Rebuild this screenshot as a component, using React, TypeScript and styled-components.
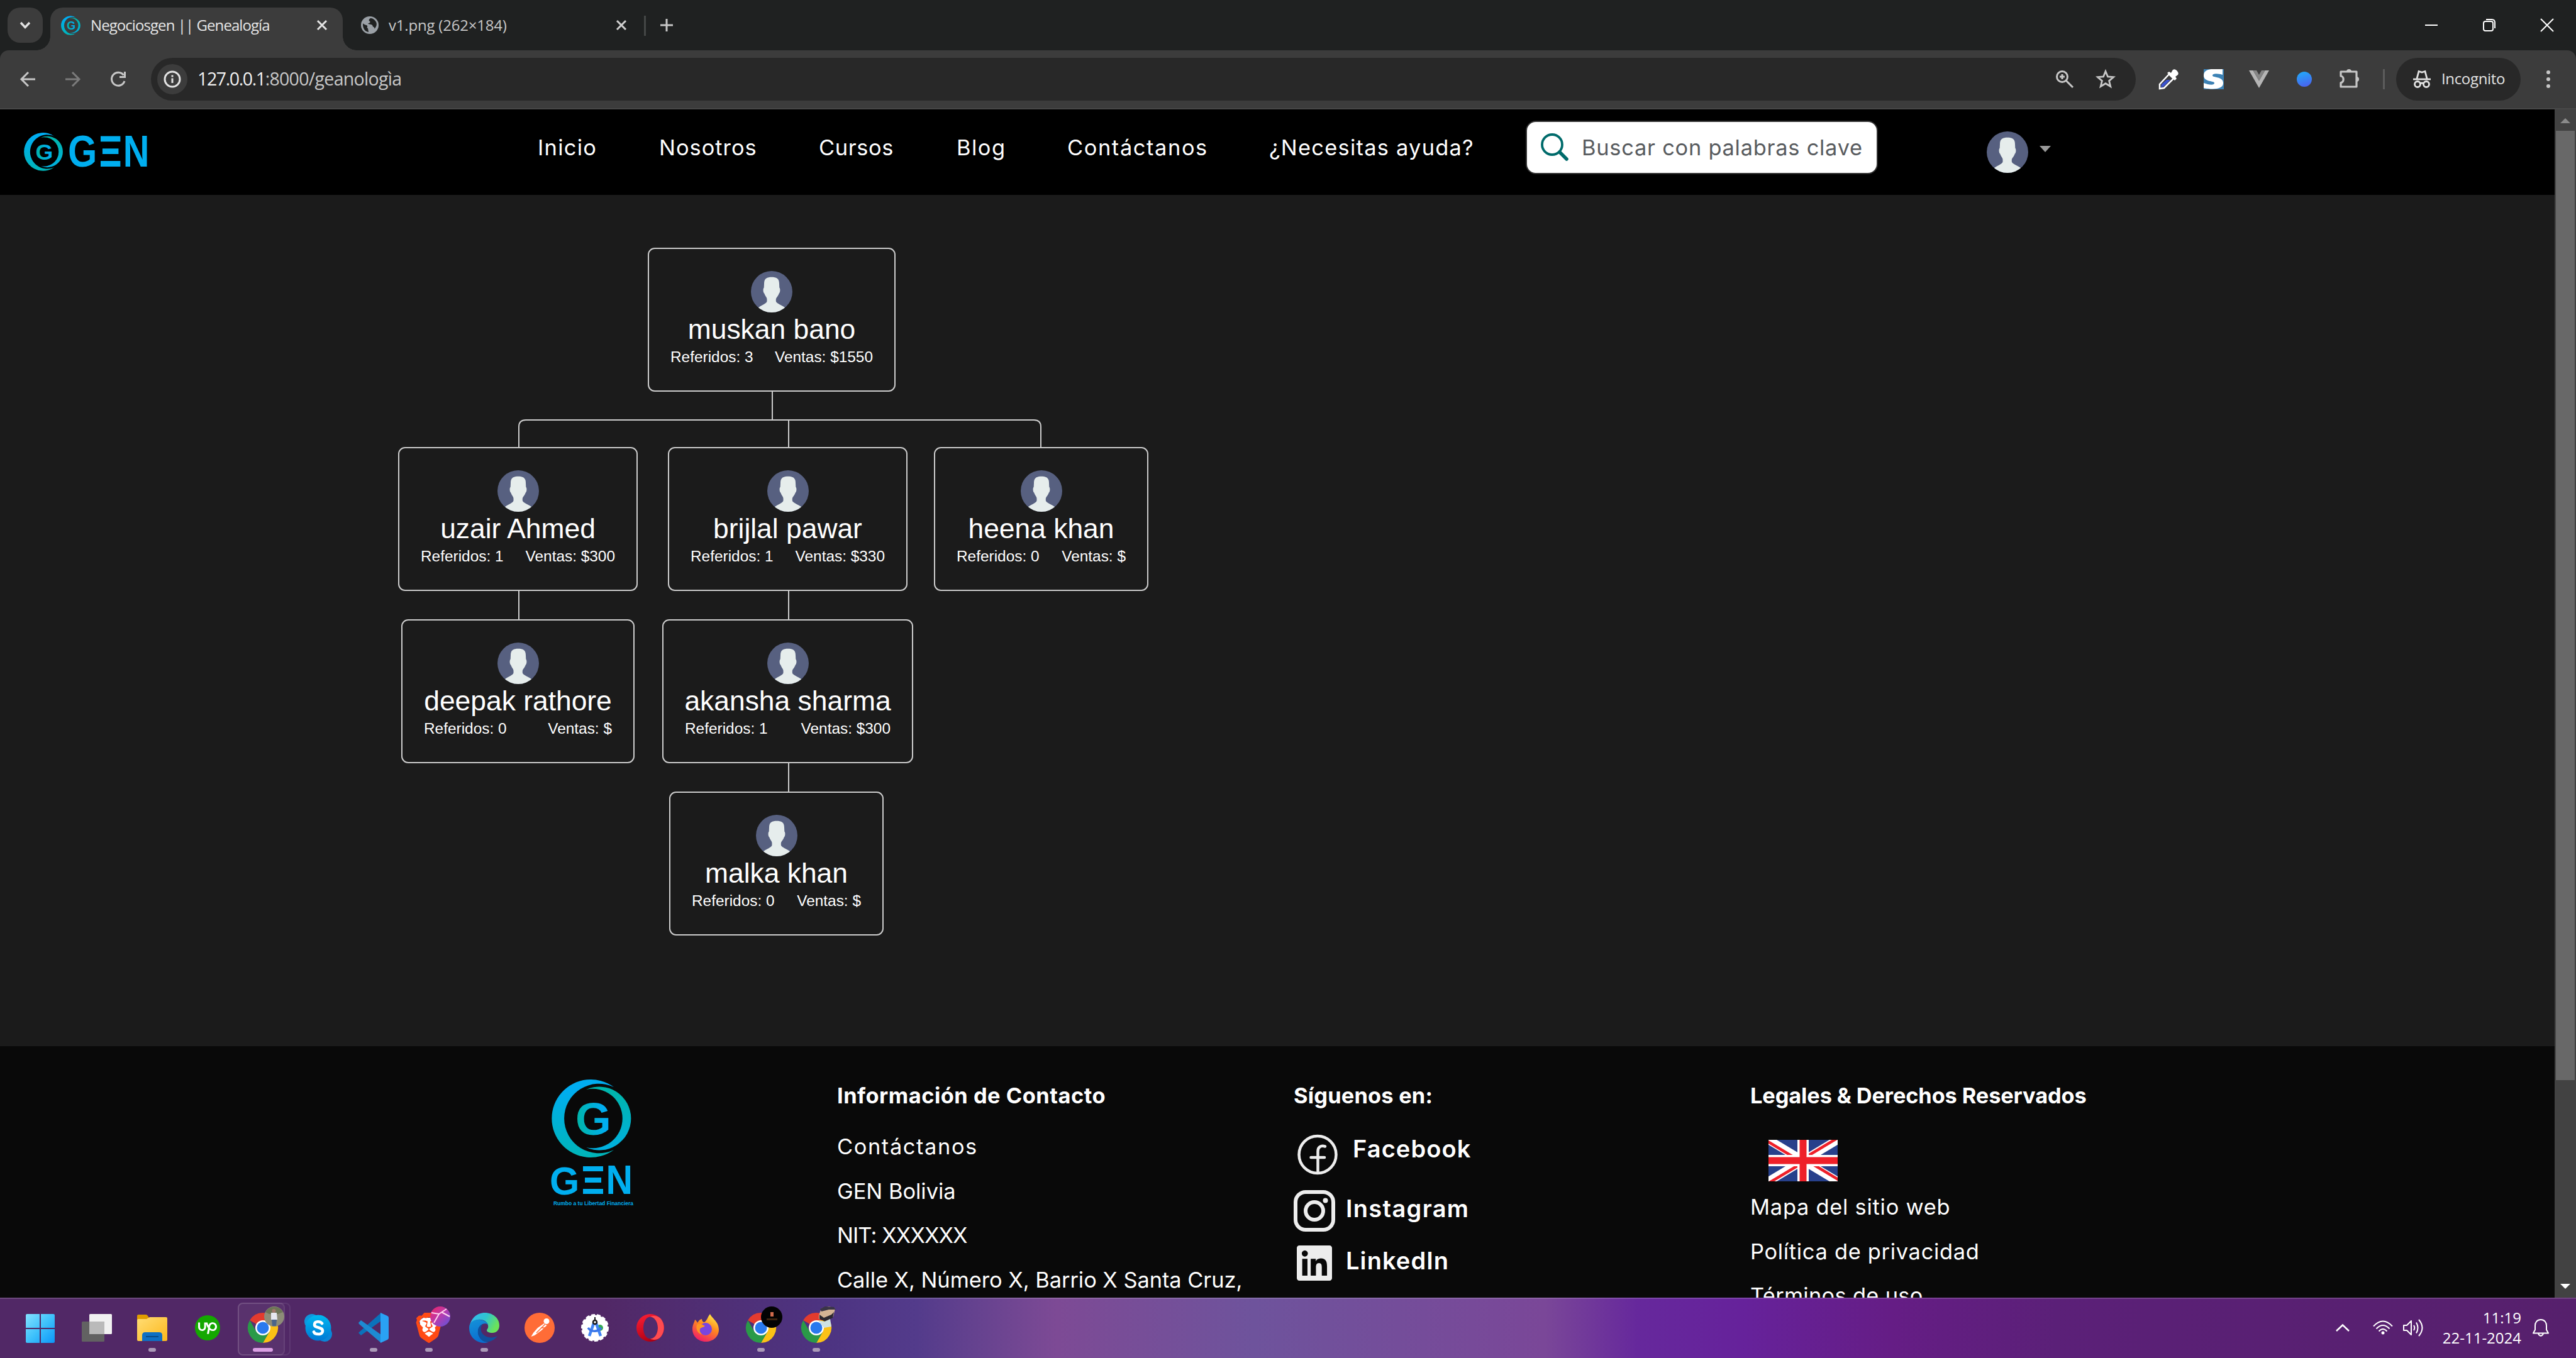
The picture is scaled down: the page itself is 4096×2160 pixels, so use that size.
import React from "react";
import styled, { createGlobalStyle, css } from "styled-components";
import { FaLinkedin, FaUpwork, FaBrave } from "react-icons/fa6";

const UI = `"Open Sans", "Noto Sans", sans-serif`;
const SITE = `Inter, "Liberation Sans", sans-serif`;
const ARIAL = `"Liberation Sans", Arial, sans-serif`;

const GlobalStyle = createGlobalStyle`
  html, body { margin: 0; padding: 0; background: #1b1b1b; }
  * { box-sizing: border-box; }
  svg { display: block; flex: none; overflow: visible; }
`;

type TypeProps = { $size: number; $ls?: number; $w?: number };
const type = css<TypeProps>`
  font-size: ${(p) => p.$size}px;
  letter-spacing: ${(p) => p.$ls ?? 0}px;
  ${(p) => (p.$w ? `width: ${p.$w}px;` : "")}
  white-space: nowrap;
  flex: none;
`;

const Screen = styled.div`
  width: 4096px;
  height: 2160px;
  display: flex;
  flex-direction: column;
  overflow: hidden;
  background: #1b1b1b;
`;

/* ---------- browser chrome ---------- */
const Frame = styled.header`
  background: #1f2121;
  font-family: ${UI};
  color: #e3e3e3;
`;
const TabStrip = styled.div`
  display: flex;
  height: 80px;
  padding: 12px 36px 0 12px;
`;
const TabSearch = styled.div`
  width: 56px;
  height: 56px;
  border-radius: 20px;
  background: #3c3c3c;
  display: flex;
  align-items: center;
  justify-content: center;
`;
const Tab = styled.div<{ $active?: boolean }>`
  position: relative;
  display: flex;
  align-items: center;
  width: ${(p) => (p.$active ? 465 : 479)}px;
  margin-left: ${(p) => (p.$active ? 12 : 0)}px;
  height: 68px;
  padding: 0 ${(p) => (p.$active ? "26px 12px 17px" : "29px 12px 29px")};
  border-radius: 20px 20px 0 0;
  background: ${(p) => (p.$active ? "#3c3c3c" : "transparent")};
  color: ${(p) => (p.$active ? "#e6e6e6" : "#c7c7c7")};
  ${(p) =>
    p.$active &&
    css`
      &::before,
      &::after {
        content: "";
        position: absolute;
        bottom: 0;
        width: 22px;
        height: 22px;
      }
      &::before {
        left: -22px;
        background: radial-gradient(circle at 0 0, transparent 21.5px, #3c3c3c 22px);
      }
      &::after {
        right: -22px;
        background: radial-gradient(circle at 100% 0, transparent 21.5px, #3c3c3c 22px);
      }
    `}
`;
const TabTitle = styled.span<TypeProps>`
  ${type}
  margin-left: 16px;
  margin-right: auto;
  line-height: 56px;
`;
const TabRule = styled.i`
  width: 3px;
  height: 32px;
  margin: 13px 23px 0 0;
  background: #444746;
`;
const WindowButtons = styled.div`
  display: flex;
  gap: 72px;
  margin: 18px 0 0 auto;
`;
const NewTab = styled.div`
  margin-top: 18px;
`;
const Toolbar = styled.div`
  display: flex;
  align-items: center;
  height: 94px;
  padding-left: 32px;
  background: #3c3c3c;
  border-bottom: 2px solid #484848;
  border-radius: 14px 14px 0 0;
`;
const NavButtons = styled.div`
  display: flex;
  gap: 48px;
`;
const Omnibox = styled.div`
  display: flex;
  align-items: center;
  width: 3156px;
  height: 68px;
  margin-left: 40px;
  padding: 0 32px 0 10px;
  border-radius: 34px;
  background: #282828;
`;
const InfoChip = styled.div`
  width: 48px;
  height: 48px;
  border-radius: 50%;
  background: #3c3c3c;
  display: flex;
  align-items: center;
  justify-content: center;
`;
const Url = styled.span<TypeProps>`
  ${type}
  margin-left: 16px;
  line-height: 66px;
  padding-bottom: 2px;
  color: #c7c7c7;
  b {
    font-weight: 400;
    letter-spacing: -1.4px;
    color: #f1f1f1;
  }
`;
const OmniActions = styled.div`
  display: flex;
  gap: 33px;
  margin-left: auto;
`;
const Extensions = styled.div`
  display: flex;
  gap: 40px;
  margin-left: 36px;
`;
const ToolRule = styled.i`
  width: 3px;
  height: 32px;
  margin: 0 18px 0 37px;
  background: #5c5c5c;
`;
const IncognitoPill = styled.div`
  display: flex;
  align-items: center;
  width: 198px;
  height: 68px;
  margin-right: 38px;
  padding-left: 25px;
  border-radius: 34px;
  background: #282828;
`;
const PillText = styled.span<TypeProps>`
  ${type}
  margin-left: 15px;
  line-height: 64px;
  padding-bottom: 2px;
`;

/* ---------- site ---------- */
const Viewport = styled.div`
  display: flex;
  height: 1890px;
`;
const Page = styled.main`
  width: 4062px;
  display: flex;
  flex-direction: column;
  overflow: hidden;
  font-family: ${SITE};
  color: #fff;
`;
const ScrollTrack = styled.div`
  width: 34px;
  display: flex;
  flex-direction: column;
  align-items: center;
  padding: 14px 0;
  background: #424242;
`;
const ScrollThumb = styled.div`
  width: 30px;
  height: 1510px;
  margin: 12px 0 auto;
  background: #686868;
`;
const Navbar = styled.nav`
  display: flex;
  align-items: flex-start;
  height: 136px;
  flex: none;
  padding: 0 0 0 38px;
  background: #000;
`;
const LogoLink = styled.a`
  width: 817px;
  padding-top: 37px;
`;
const NavLinks = styled.div`
  display: flex;
  gap: 101px;
  padding-top: 34px;
`;
const NavLink = styled.a<TypeProps>`
  ${type}
  line-height: 54px;
`;
const SearchBox = styled.div`
  display: flex;
  align-items: flex-start;
  width: 560px;
  height: 85px;
  margin: 18px 0 0 85px;
  padding: 0 0 0 22px;
  border: 2px solid #333;
  border-radius: 16px;
  background: #fff;
`;
const SearchIconBox = styled.span`
  padding-top: 18px;
`;
const Placeholder = styled.span<TypeProps>`
  ${type}
  margin: 14px 0 0 21px;
  line-height: 54px;
  color: #595c5f;
`;
const Account = styled.div`
  display: flex;
  gap: 18px;
  margin: 35px 0 0 173px;
`;
const Caret = styled.i<{ $up?: boolean; $c: string; $x: number; $y: number }>`
  display: block;
  width: 0;
  height: 0;
  border: solid transparent;
  border-width: ${(p) => (p.$up ? `0 ${p.$x}px ${p.$y}px` : `${p.$y}px ${p.$x}px 0`)};
  border-${(p) => (p.$up ? "bottom" : "top")}-color: ${(p) => p.$c};
`;
const AccountCaret = styled.div`
  padding-top: 23px;
`;

const Canvas = styled.section`
  position: relative;
  height: 1354px;
  flex: none;
  background: #1b1b1b;
  font-family: ${ARIAL};
`;
const Wires = styled.svg`
  position: absolute;
  left: 0;
  top: 0;
`;
const Node = styled.article<{ $x: number; $y: number; $w: number }>`
  position: absolute;
  left: ${(p) => p.$x}px;
  top: ${(p) => p.$y}px;
  width: ${(p) => p.$w}px;
  height: 229px;
  padding: 35px 34px 0;
  border: 2px solid #ccc;
  border-radius: 11px;
  display: flex;
  flex-direction: column;
  align-items: center;
`;
const NodeName = styled.h3`
  margin: 2px 0 0;
  font-size: 44.4px;
  font-weight: 400;
  line-height: 50px;
  white-space: nowrap;
`;
const NodeStats = styled.div`
  align-self: stretch;
  display: flex;
  justify-content: space-between;
  font-size: 24.4px;
  line-height: 38px;
  white-space: nowrap;
`;

const Footer = styled.footer`
  display: grid;
  grid-template-columns: 455px 726px 726px auto;
  align-items: start;
  height: 400px;
  flex: none;
  padding: 52px 0 0 877px;
  background: #090909;
  overflow: hidden;
`;
const FooterLogo = styled.div`
  padding-top: 1px;
`;
const Column = styled.div`
  display: flex;
  flex-direction: column;
  align-items: flex-start;
`;
const Heading = styled.h4<TypeProps>`
  ${type}
  margin: 0 0 27px -1px;
  line-height: 54px;
  font-weight: 700;
`;
const FooterLink = styled.a<TypeProps>`
  ${type}
  line-height: 54px;
  margin: 0 0 16.5px -1px;
`;
const Social = styled.a<{ $indent: number; $after: number }>`
  display: flex;
  align-items: flex-start;
  height: 66px;
  margin: 0 0 ${(p) => p.$after}px ${(p) => p.$indent}px;
`;
const SocialIcon = styled.span`
  width: 66px;
  height: 66px;
  display: flex;
  align-items: center;
  justify-content: center;
  color: #ededed;
`;
const SocialName = styled.b<TypeProps & { $gap: number; $lift: number }>`
  ${type}
  line-height: 58px;
  font-weight: 600;
  margin: ${(p) => -p.$lift}px 0 0 ${(p) => p.$gap}px;
`;
const FlagBox = styled.div`
  margin: 16px 0 14px 28px;
`;
const SocialList = styled.div`
  padding-top: 6px;
  margin-left: -1px;
`;

/* ---------- taskbar ---------- */
const Taskbar = styled.div`
  display: flex;
  height: 96px;
  padding: 0 43px 0 22px;
  box-shadow: inset 0 2px 0 rgba(255, 255, 255, 0.16);
  background: linear-gradient(
    90deg,
    #512866 0,
    #512866 960px,
    #4f2f76 1150px,
    #4d3482 1330px,
    #533b8b 1458px,
    #65428f 1551px,
    #7d4a95 1680px,
    #6e539c 1994px,
    #7a4798 2456px,
    #66289c 2604px,
    #66229b 2770px,
    #651d85 3010px,
    #5b2078 3268px,
    #56206c 4096px
  );
  font-family: ${UI};
  color: #fff;
`;
const AppButton = styled.div<{ $active?: boolean }>`
  position: relative;
  width: 88px;
  height: 96px;
  display: flex;
  align-items: center;
  justify-content: center;
  ${(p) =>
    p.$active &&
    css`
      &::before,
      &::after {
        content: "";
        position: absolute;
        left: 4px;
        top: 8px;
        width: 71px;
        height: 80px;
        border-radius: 8px;
        border: 2px solid rgba(255, 255, 255, 0.08);
        background: rgba(255, 255, 255, 0.05);
      }
      &::after {
        width: 80px;
        background: none;
      }
    `}
  svg {
    position: relative;
  }
`;
const Running = styled.i<{ $active?: boolean }>`
  position: absolute;
  bottom: 10px;
  left: ${(p) => (p.$active ? 28 : 38)}px;
  width: ${(p) => (p.$active ? 32 : 12)}px;
  height: 6px;
  border-radius: 3px;
  background: ${(p) => (p.$active ? "#dba0e4" : "#ab9ab8")};
`;
const Badge = styled.span<{ $x: number }>`
  position: absolute;
  z-index: 1;
  left: ${(p) => p.$x}px;
  top: 14px;
`;
const Tray = styled.div`
  display: flex;
  align-items: center;
  margin-left: auto;
`;
const TrayIcon = styled.span<{ $gap: number }>`
  margin-left: ${(p) => p.$gap}px;
`;
const Clock = styled.div`
  width: 122px;
  margin: 0 18px 0 34px;
  display: flex;
  flex-direction: column;
  align-items: flex-end;
`;
const ClockLine = styled.span<TypeProps>`
  ${type}
  line-height: 32px;
`;

/* ---------- drawings ---------- */
const Stroke = (p: { s: number; w?: number; c?: string; h?: number; children: React.ReactNode }) => (
  <svg width={p.s} height={p.h ?? p.s} viewBox={`0 0 ${p.s} ${p.h ?? p.s}`} fill="none" stroke={p.c ?? "#c7c7c7"} strokeWidth={p.w ?? 3}>
    {p.children}
  </svg>
);

const Swirl = ({ id, k = 1 }: { id: string; k?: number }) => (
  <g transform={`scale(${k})`}>
    <defs>
      <linearGradient id={`${id}a`} x1="0" y1="0" x2="0" y2="1">
        <stop offset="0.1" stopColor="#00adf2" />
        <stop offset="1" stopColor="#00b5b8" />
      </linearGradient>
      <linearGradient id={`${id}b`} x1="0" y1="0" x2="0" y2="1">
        <stop offset="0.1" stopColor="#00b5ad" />
        <stop offset="1" stopColor="#00b0e0" />
      </linearGradient>
      <linearGradient id={`${id}c`} x1="0" y1="0.6" x2="1" y2="0.4">
        <stop offset="0.1" stopColor="#00b5ad" />
        <stop offset="0.8" stopColor="#00adf0" />
      </linearGradient>
    </defs>
    <path d="M99 12A62 62 0 1 0 99 112A55.3 55.3 0 1 1 99 12Z" fill={`url(#${id}a)`} />
    <path d="M55 16A50.5 50.5 0 1 1 55 108A47.2 47.2 0 1 0 55 16Z" fill={`url(#${id}b)`} />
    <text x="38" y="88" fontFamily="Liberation Sans" fontWeight="700" fontSize="73" fill={`url(#${id}c)`}>
      G
    </text>
  </g>
);

const Wordmark = ({ x, y, kx = 1, ky = 1 }: { x: number; y: number; kx?: number; ky?: number }) => (
  <g transform={`translate(${x} ${y}) scale(${kx} ${ky})`} fill="#00aeef" fontFamily="Liberation Sans" fontWeight="700" fontSize="62">
    <text transform="translate(-3 -0.500) scale(0.980 1.020)">G</text>
    <path d="M50-45H82V-37H50ZM53-27H79V-19H53ZM50-9H82V-1H50Z" />
    <text transform="translate(86.500 -1) scale(0.950 1.030)">N</text>
  </g>
);

const NavLogo = () => (
  <svg width="200" height="62" viewBox="0 0 200 62">
    <Swirl id="n" k={0.49} />
    <Wordmark x={73} y={55} kx={0.98} ky={1.1} />
  </svg>
);

const StackedLogo = () => (
  <svg width="130" height="202" viewBox="0 0 130 202">
    <Swirl id="f" />
    <Wordmark x={0} y={183} />
    <text x="3" y="200" textLength="127" fontFamily="Liberation Sans" fontWeight="700" fontSize="8.8" fill="#00aeef" lengthAdjust="spacingAndGlyphs">
      Rumbo a tu Libertad Financiera
    </text>
  </svg>
);

const Avatar = () => (
  <svg width="66" height="66" viewBox="0 0 66 66">
    <defs>
      <clipPath id="avatarClip">
        <circle cx="33" cy="33" r="33" />
      </clipPath>
    </defs>
    <g clipPath="url(#avatarClip)">
      <rect width="66" height="66" fill="#576080" />
      <path
        d="M33 9.7C26 9.7 21 11.5 21 20L20.7 26.5C19 28 19.2 34.5 21.5 36C22.5 40 25.500 41.5 25.5 45V48C25.5 51 21 52.5 12 58L6 66H60L54 58C45 52.5 40 51 39.8 48V45C40.5 41.5 43.5 40 44.5 36C46.8 34.5 47 28 45.3 26.5L45 20C45 11.5 40 9.7 33 9.7Z"
        fill="#e6edec"
      />
    </g>
  </svg>
);

const Flag = () => (
  <svg width="110" height="66" viewBox="0 0 110 66">
    <defs>
      <clipPath id="flagClip">
        <rect width="110" height="66" />
      </clipPath>
    </defs>
    <g clipPath="url(#flagClip)">
      <rect width="110" height="66" fill="#27408b" />
      <path d="M0 0L110 66M110 0L0 66" stroke="#fff" strokeWidth="13.5" />
      <path d="M-4 1L55 36.5M110 -3L55 30M114 65L55 29.5M0 69L55 36" stroke="#ee2029" strokeWidth="4.5" />
      <path d="M55 0V66" stroke="#fff" strokeWidth="18" />
      <path d="M0 33H110" stroke="#fff" strokeWidth="18" />
      <path d="M55 0V66" stroke="#ee2029" strokeWidth="11" />
      <path d="M0 33H110" stroke="#ee2029" strokeWidth="11" />
    </g>
  </svg>
);

const Globe = () => (
  <svg width="28" height="28" viewBox="0 0 28 28">
    <circle cx="14" cy="14" r="14" fill="#9aa0a6" />
    <path d="M3 11C5 14 9 13 10 15S8 18 11 19L12 25C7 24.5 2.5 20 3 11ZM15 3C12 5 12 7 14 8C16 9 13 11 11 11.5C12 13 18 12 18.5 15C19 18 22 16 21.5 20C24 17 26 13 24 9C21 4 18 3 15 3Z" fill="#1f2121" />
  </svg>
);

const ChromeIcon = () => (
  <svg width="48" height="48" viewBox="0 0 48 48">
    <path d="M24 24L3.2 12A24 24 0 0 1 44.8 12Z" fill="#e33b2e" />
    <path d="M24 12H44.8A24 24 0 0 1 24 48L34.4 30Z" fill="#fbc116" />
    <path d="M3.2 12A24 24 0 0 0 24 48L34.4 30L24 34L13.6 30Z" fill="#2a9a48" />
    <circle cx="24" cy="24" r="12" fill="#fff" />
    <circle cx="24" cy="24" r="9.5" fill="#2979ee" />
  </svg>
);

const WindowsIcon = () => (
  <svg width="46" height="46" viewBox="0 0 46 46">
    <defs>
      <linearGradient id="win" gradientUnits="userSpaceOnUse" x1="0" y1="0" x2="46" y2="46">
        <stop offset="0" stopColor="#84e2ff" />
        <stop offset="0.5" stopColor="#3fc2fb" />
        <stop offset="1" stopColor="#0c96f8" />
      </linearGradient>
    </defs>
    <path transform="translate(-2 1)" d="M2 0H22V22H0V2Q0 0 2 0ZM24 0H44Q46 0 46 2V22H24ZM0 24H22V46H2Q0 46 0 44ZM24 24H46V44Q46 46 44 46H24Z" fill="url(#win)" />
  </svg>
);
const TaskViewIcon = () => (
  <svg width="48" height="44" viewBox="0 0 48 44">
    <rect x="12" width="36" height="32" rx="1.5" fill="#f1f1f1" />
    <rect y="12" width="36" height="32" rx="1.5" fill="#626262" />
    <rect x="12" y="12" width="24" height="20" fill="#bababa" />
  </svg>
);
const ExplorerIcon = () => (
  <svg width="48" height="42" viewBox="0 0 48 42">
    <defs>
      <linearGradient id="folder" x1="0" y1="0" x2="1" y2="1">
        <stop offset="0" stopColor="#ffdd75" />
        <stop offset="1" stopColor="#fcb81c" />
      </linearGradient>
    </defs>
    <path d="M0 2Q0 0 2 0H14Q16 0 17 2L19 5V12H0Z" fill="#e09d00" />
    <path d="M0 9Q0 7 2 7H15L20 4H46Q48 4 48 6V40Q48 42 46 42H2Q0 42 0 40Z" fill="url(#folder)" />
    <path d="M8 42V33Q8 28 13 28H35Q40 28 40 33V42Z" fill="#0f70c4" />
    <path d="M14 35H34" stroke="#0a4a85" strokeWidth="2" />
  </svg>
);
const UpworkIcon = () => (
  <svg width="40" height="40" viewBox="0 0 40 40">
    <circle cx="20" cy="20" r="20" fill="#14a800" />
    <FaUpwork x="5" y="5.5" size={30} color="#fff" />
  </svg>
);
const SkypeIcon = () => (
  <svg width="44" height="44" viewBox="0 0 44 44">
    <defs>
      <linearGradient id="sky" x1="0" y1="0" x2="0" y2="1">
        <stop offset="0" stopColor="#00b7f0" />
        <stop offset="1" stopColor="#0078d4" />
      </linearGradient>
    </defs>
    <circle cx="12" cy="12" r="12" fill="#0f96dc" />
    <circle cx="32" cy="32" r="12" fill="#0a86d8" />
    <circle cx="22" cy="22" r="20.5" fill="url(#sky)" />
    <path d="M28 15C25 11 16 11 16 17C16 23 29 20 29 27C29 34 17 33 15 28.500" fill="none" stroke="#fff" strokeWidth="4.6" strokeLinecap="round" />
  </svg>
);
const CodeIcon = () => (
  <svg width="48" height="48" viewBox="0 0 48 48">
    <path d="M0 32L4 36L36 13V0L2 30Z" fill="#0a72bb" />
    <path d="M0 16L4 12L36 35V48L1 18Z" fill="#1d8ad3" />
    <path d="M35 0L46 5Q48 6 48 8V40Q48 42 46 43L35 48Z" fill="#2aa2f4" />
  </svg>
);
const BraveIcon = () => (
  <svg width="42" height="48" viewBox="0 0 42 48">
    <path d="M6 12L12 8H30L36 12L34 27L27 35L21 40L15 35L8 27Z" fill="#fff" />
    <FaBrave x="-3" y="0" size={48} color="#ff4a14" />
  </svg>
);
const EdgeIcon = () => (
  <svg width="48" height="48" viewBox="0 0 48 48">
    <defs>
      <linearGradient id="edgeTop" x1="0" y1="0" x2="1" y2="0.4">
        <stop offset="0" stopColor="#35b8f3" />
        <stop offset="0.55" stopColor="#2fc5cf" />
        <stop offset="1" stopColor="#6be35a" />
      </linearGradient>
      <linearGradient id="edgeLow" x1="0" y1="0" x2="0.3" y2="1">
        <stop offset="0" stopColor="#1592d8" />
        <stop offset="1" stopColor="#0a6fd0" />
      </linearGradient>
    </defs>
    <path d="M1 20C4 7 14 0 25 0C38 0 48 9 48 20C48 28 43 32 37 32C31 32 28 30 28 28C28 26 31 25 30 20C29 14 22 10 14 11C7 12 3 15 1 20Z" fill="url(#edgeTop)" />
    <path d="M0 24C0 15 7 11 15 11C23 11 29 15 30 19C26 15 14 18 14 30C14 39 21 47 31 47C15 51 0 41 0 24Z" fill="url(#edgeLow)" />
    <path d="M22 18C16 20 13 26 14 33C16 42 23 48 31 46C37 45 42 41 45 37C36 42 22 39 19 29C18 24 19 21 22 18Z" fill="#10509e" />
  </svg>
);
const PostmanIcon = () => (
  <svg width="48" height="48" viewBox="0 0 48 48">
    <circle cx="24" cy="24" r="24" fill="#ff6c37" />
    <circle cx="35" cy="13.5" r="4.5" fill="#fff" />
    <path d="M31 17L35.500 20L27 28L16 36L10.500 38L14 32L21 24Z" fill="#fff" />
    <path d="M33 18L19 32M26 24L33 24" stroke="#ff6c37" strokeWidth="1.5" />
  </svg>
);
const StudioIcon = () => (
  <svg width="44" height="44" viewBox="0 0 44 44">
    <circle cx="22" cy="22" r="20.5" fill="#fff" stroke="#fff" strokeWidth="3" strokeDasharray="6 3" />
    <circle cx="30" cy="22" r="5" fill="#35a853" />
    <path d="M21 12L13 35M23 12L31 35" stroke="#4285f4" strokeWidth="4.5" />
    <path d="M11 22C16 29 26 29 32 22" fill="none" stroke="#3a76e8" strokeWidth="3.5" />
    <circle cx="22" cy="13" r="3" fill="#fff" stroke="#1a1a1a" strokeWidth="2.5" />
    <path d="M22 5V10" stroke="#1a1a1a" strokeWidth="2" />
  </svg>
);
const OperaIcon = () => (
  <svg width="44" height="44" viewBox="0 0 44 44">
    <defs>
      <linearGradient id="opera" x1="0" y1="0" x2="0.4" y2="1">
        <stop offset="0" stopColor="#ff2036" />
        <stop offset="1" stopColor="#b00014" />
      </linearGradient>
    </defs>
    <path fillRule="evenodd" d="M22 0A22 22 0 1 1 22 44A22 22 0 1 1 22 0ZM22 4.5C15 4.5 11 13 11 22S15 39.5 22 39.5S34 31 34 22S29 4.5 22 4.5Z" fill="url(#opera)" />
    <path d="M22 4.5C29 4.5 34 13 34 22S29 39.5 22 39.5C27 42 33 41 37 38C46 30 46 14 37 6C33 3 27 2 22 4.5Z" fill="#ff4b50" />
  </svg>
);
const FirefoxIcon = () => (
  <svg width="44" height="44" viewBox="0 0 44 44">
    <defs>
      <linearGradient id="fox" x1="0.8" y1="0" x2="0.3" y2="1">
        <stop offset="0" stopColor="#fff04a" />
        <stop offset="0.45" stopColor="#ff8a1f" />
        <stop offset="1" stopColor="#f01a6a" />
      </linearGradient>
    </defs>
    <path d="M29 0C32 7 43 12 43 25C43 36 34 44 22 44S1 35 1 24C1 17 4 14 5 9C7 10 8 12 9 14C11 10 14 8 16 8C16 11 18 13 20 13C24 11 25 5 29 0Z" fill="url(#fox)" />
    <circle cx="22" cy="24" r="10" fill="#7a45e0" />
    <path d="M8 17C12 14 17 17 21 19C18 22 14 21 13 24C12 28 14 31 17 33C9 31 6 24 8 17Z" fill="#ff9722" />
  </svg>
);
const PhotoBadge = () => (
  <svg width="32" height="32" viewBox="0 0 32 32">
    <circle cx="16" cy="16" r="16" fill="#8d8c78" />
    <path d="M2 9A16 16 0 0 1 30 9L22 12H8Z" fill="#6c7556" />
    <path d="M11 10H20L21 21H11Z" fill="#e6e8ef" />
    <circle cx="15.5" cy="7" r="3" fill="#a0796a" />
    <path d="M12 21H20L19 31H13Z" fill="#4b6489" />
  </svg>
);
const PinkBadge = () => (
  <svg width="32" height="32" viewBox="0 0 32 32">
    <defs>
      <linearGradient id="pk" x1="0" y1="0" x2="1" y2="1">
        <stop offset="0.1" stopColor="#e8276f" />
        <stop offset="0.5" stopColor="#b63cb0" />
        <stop offset="1" stopColor="#5a55dc" />
      </linearGradient>
    </defs>
    <circle cx="16" cy="16" r="16" fill="url(#pk)" />
    <path d="M2 10L14 12L26 4M14 12L6 26M18 9L31 16" stroke="#ffd3ee" strokeWidth="2" fill="none" />
  </svg>
);
const BlackBadge = () => (
  <svg width="34" height="34" viewBox="0 0 34 34">
    <circle cx="17" cy="17" r="17" fill="#030303" />
    <path d="M15 9H20V16H15Z" fill="#cf6a4c" />
    <path d="M9 19H26V22H9Z" fill="#3d2410" />
  </svg>
);
const FaceBadge = () => (
  <svg width="32" height="34" viewBox="0 0 32 34">
    <path d="M4 14L8 3L20 0L30 3L27 16L14 22L4 20Z" fill="#d3b394" />
    <path d="M6 4L14 0L28 1L31 5L20 5L8 8Z" fill="#3a3546" />
    <path d="M5 13L12 18L24 13L28 9L26 18L14 24L5 20Z" fill="#2c2830" />
    <path d="M3 22L13 24L22 20L24 32L12 34Z" fill="#cfe2e0" />
  </svg>
);

const nodes = [
  { name: "muskan bano", refs: "3", sales: "$1550", x: 1030, y: 84, w: 394 },
  { name: "uzair Ahmed", refs: "1", sales: "$300", x: 633, y: 401, w: 381 },
  { name: "brijlal pawar", refs: "1", sales: "$330", x: 1062, y: 401, w: 381 },
  { name: "heena khan", refs: "0", sales: "$", x: 1485, y: 401, w: 341 },
  { name: "deepak rathore", refs: "0", sales: "$", x: 638, y: 675, w: 371 },
  { name: "akansha sharma", refs: "1", sales: "$300", x: 1053, y: 675, w: 399 },
  { name: "malka khan", refs: "0", sales: "$", x: 1064, y: 949, w: 341 },
];

const links = [
  { t: "Inicio", w: 92, ls: 1.3 },
  { t: "Nosotros", w: 153, ls: 1 },
  { t: "Cursos", w: 118, ls: 0.6 },
  { t: "Blog", w: 75, ls: 1.5 },
  { t: "Contáctanos", w: 220, ls: 1.6 },
  { t: "¿Necesitas ayuda?", w: 323, ls: 1.25 },
];

const apps = [
  { icon: <WindowsIcon /> },
  { icon: <TaskViewIcon /> },
  { icon: <ExplorerIcon />, run: true },
  { icon: <UpworkIcon /> },
  { icon: <ChromeIcon />, run: true, active: true, badge: <PhotoBadge />, bx: 46 },
  { icon: <SkypeIcon /> },
  { icon: <CodeIcon />, run: true },
  { icon: <BraveIcon />, run: true, badge: <PinkBadge />, bx: 46 },
  { icon: <EdgeIcon />, run: true },
  { icon: <PostmanIcon /> },
  { icon: <StudioIcon /> },
  { icon: <OperaIcon /> },
  { icon: <FirefoxIcon /> },
  { icon: <ChromeIcon />, run: true, badge: <BlackBadge />, bx: 44 },
  { icon: <ChromeIcon />, run: true, badge: <FaceBadge />, bx: 44 },
];

export default function App() {
  return (
    <Screen>
      <GlobalStyle />
      <Frame>
        <TabStrip>
          <TabSearch>
            <Stroke s={18} c="#e3e3e3" w={3.4}><path d="M2 5L9 12.5L16 5" /></Stroke>
          </TabSearch>
          <Tab $active>
            <svg width="31" height="31" viewBox="0 0 127 124"><Swirl id="t" /></svg>
            <TabTitle $size={24} $ls={-0.93}>Negociosgen || Genealogía</TabTitle>
            <Stroke s={14} c="#e3e3e3"><path d="M0 0L14 14M14 0L0 14" /></Stroke>
          </Tab>
          <Tab>
            <Globe />
            <TabTitle $size={24} $ls={-0.2}>v1.png (262×184)</TabTitle>
            <Stroke s={14} c="#d0d0d0"><path d="M0 0L14 14M14 0L0 14" /></Stroke>
          </Tab>
          <TabRule />
          <NewTab><Stroke s={20}><path d="M10 0V20M0 10H20" /></Stroke></NewTab>
          <WindowButtons>
            <Stroke s={20} c="#fff" w={2}><path d="M0 10H20" /></Stroke>
            <Stroke s={20} c="#fff" w={2}><rect x="1" y="4" width="15" height="15" rx="3" /><path d="M5 1H14Q19 1 19 6V15" /></Stroke>
            <Stroke s={20} c="#fff" w={2}><path d="M0 0L20 20M20 0L0 20" /></Stroke>
          </WindowButtons>
        </TabStrip>
        <Toolbar>
          <NavButtons>
            <Stroke s={24}><path d="M24 12H2M13 1L2 12L13 23" /></Stroke>
            <Stroke s={24} c="#7b7b7b"><path d="M0 12H22M11 1L22 12L11 23" /></Stroke>
            <Stroke s={24}><path d="M20.5 5.5A10.5 10.5 0 1 0 22 15M22.5 0V8.5H14" /></Stroke>
          </NavButtons>
          <Omnibox>
            <InfoChip>
              <Stroke s={28} c="#e3e3e3"><circle cx="14" cy="14" r="12" /><path d="M14 12.5V20M14 7.5V10.5" /></Stroke>
            </InfoChip>
            <Url $size={28.5} $ls={-0.7}><b>127.0.0.1</b>:8000/geanologìa</Url>
            <OmniActions>
              <Stroke s={32}><circle cx="12" cy="12" r="8.5" /><path d="M18 18L29 29M12 8V16M8 12H16" /></Stroke>
              <Stroke s={32} w={2.8}><path d="M16 3.5L19.5 12L28.5 12.7L21.6 18.6L23.8 27.5L16 22.7L8.2 27.5L10.4 18.6L3.5 12.7L12.5 12Z" /></Stroke>
            </OmniActions>
          </Omnibox>
          <Extensions>
            <svg width="32" height="32" viewBox="0 0 32 32">
              <path d="M17 8L24 15L9 30L2 31L2 24Z" fill="#3c3c3c" stroke="#fff" strokeWidth="2.5" />
              <path d="M13 17H19L8 28L4 29L5 24Z" fill="#3a52d0" />
              <path d="M14 6L17 4L20 6L23 1Q26 -1 29 2Q33 6 31 9L27 12L29 15L26 18Z" fill="#fff" />
            </svg>
            <svg width="32" height="32" viewBox="0 0 32 32">
              <rect width="32" height="32" fill="#3d82b5" />
              <path d="M30 0V9C25 7 14 6 14 10C14 14 31 11 31 22C31 32 16 33 0 30V22C8 25 17 26 17 22C17 18 0 21 0 10C0 2 8 0 14 0Z" fill="#fff" />
            </svg>
            <svg width="32" height="32" viewBox="0 0 32 32">
              <path d="M0 2H6.5L16 18.5L25.5 2H32L16 30Z" fill="#b5b5b5" />
              <path d="M6.5 2H12L16 9L20 2H25.5L16 18.5Z" fill="#858585" />
            </svg>
            <svg width="32" height="32" viewBox="0 0 32 32">
              <defs>
                <linearGradient id="dot" x1="0.3" y1="0" x2="0.6" y2="1">
                  <stop offset="0" stopColor="#22a8f8" />
                  <stop offset="1" stopColor="#4a62ee" />
                </linearGradient>
              </defs>
              <circle cx="16" cy="16" r="12" fill="url(#dot)" />
            </svg>
            <Stroke s={32} w={3.2}>
              <path d="M2 4H27V28H2V21.5C7.5 21 7.5 11.5 2 11Z" strokeLinejoin="round" />
              <path d="M11 4A4 4 0 0 1 19 4ZM27 12A4 4 0 0 1 27 20Z" fill="#c7c7c7" stroke="none" />
            </Stroke>
          </Extensions>
          <ToolRule />
          <IncognitoPill>
            <Stroke s={32} h={30} c="#e3e3e3" w={2.8}>
              <path d="M2 15H30" />
              <path d="M8 14L11 2.5L16 4L21 2.5L24 14" />
              <circle cx="9" cy="23" r="4.5" />
              <circle cx="23" cy="23" r="4.5" />
              <path d="M13 22Q16 20 19 22" />
            </Stroke>
            <PillText $size={24} $ls={-0.35}>Incognito</PillText>
          </IncognitoPill>
          <svg width="12" height="28" viewBox="0 0 12 28" fill="#c7c7c7"><circle cx="6" cy="3" r="3" /><circle cx="6" cy="14" r="3" /><circle cx="6" cy="25" r="3" /></svg>
        </Toolbar>
      </Frame>

      <Viewport>
        <Page>
          <Navbar>
            <LogoLink><NavLogo /></LogoLink>
            <NavLinks>
              {links.map((l) => (
                <NavLink key={l.t} $size={34.4} $w={l.w} $ls={l.ls}>{l.t}</NavLink>
              ))}
            </NavLinks>
            <SearchBox>
              <SearchIconBox>
                <Stroke s={44} c="#006b6b" w={3.8}>
                  <circle cx="18" cy="18" r="16" />
                  <path d="M30 30L41 41" strokeWidth="5.5" strokeLinecap="round" />
                </Stroke>
              </SearchIconBox>
              <Placeholder $size={34.4} $ls={0.75}>Buscar con palabras clave</Placeholder>
            </SearchBox>
            <Account>
              <Avatar />
              <AccountCaret><Caret $c="#999" $x={9.5} $y={10} /></AccountCaret>
            </Account>
          </Navbar>

          <Canvas>
            <Wires width="2000" height="1354" viewBox="0 0 2000 1354" fill="none" stroke="#ccc" strokeWidth="2">
              <path d="M1228 313V358M825 401V369Q825 358 836 358H1644Q1655 358 1655 369V401M1254 358V401M825 630V675M1254 630V675M1254 904V949" />
            </Wires>
            {nodes.map((n) => (
              <Node key={n.name} $x={n.x} $y={n.y} $w={n.w}>
                <Avatar />
                <NodeName>{n.name}</NodeName>
                <NodeStats>
                  <span>Referidos: {n.refs}</span>
                  <span>Ventas: {n.sales}</span>
                </NodeStats>
              </Node>
            ))}
          </Canvas>

          <Footer>
            <FooterLogo><StackedLogo /></FooterLogo>
            <Column>
              <Heading $size={34.4} $ls={0.5}>Información de Contacto</Heading>
              <FooterLink $size={34.4} $ls={1.6}>Contáctanos</FooterLink>
              <FooterLink $size={34.4}>GEN Bolivia</FooterLink>
              <FooterLink $size={34.4} $ls={-0.9}>NIT: XXXXXX</FooterLink>
              <FooterLink $size={34.4} $ls={-0.04}>Calle X, Número X, Barrio X Santa Cruz,</FooterLink>
            </Column>
            <Column>
              <Heading $size={34.4} $ls={0.2}>Síguenos en:</Heading>
              <SocialList>
                <Social $indent={5} $after={24}>
                  <SocialIcon>
                    <Stroke s={66} c="#ededed" w={4.5}>
                      <circle cx="33" cy="33.5" r="29.5" />
                      <path d="M45 20.5C38 18.5 33.5 21.5 33.5 28V60M22.5 38H44" strokeLinecap="round" />
                    </Stroke>
                  </SocialIcon>
                  <SocialName $size={38} $ls={1.1} $gap={23} $lift={5}>Facebook</SocialName>
                </Social>
                <Social $indent={0} $after={17}>
                  <SocialIcon>
                    <Stroke s={66} c="#ededed" w={6}>
                      <rect x="3" y="3" width="60" height="60" rx="16" />
                      <circle cx="33" cy="33" r="14" />
                      <circle cx="50.5" cy="16.5" r="4" fill="#ededed" stroke="none" />
                    </Stroke>
                  </SocialIcon>
                  <SocialName $size={38} $ls={1.3} $gap={17} $lift={0}>Instagram</SocialName>
                </Social>
                <Social $indent={0} $after={0}>
                  <SocialIcon><FaLinkedin size={64} /></SocialIcon>
                  <SocialName $size={38} $ls={1.1} $gap={17} $lift={0}>LinkedIn</SocialName>
                </Social>
              </SocialList>
            </Column>
            <Column>
              <Heading $size={34.4} $ls={-0.13}>Legales &amp; Derechos Reservados</Heading>
              <FlagBox><Flag /></FlagBox>
              <FooterLink $size={34.4} $ls={0.75}>Mapa del sitio web</FooterLink>
              <FooterLink $size={34.4} $ls={0.7}>Política de privacidad</FooterLink>
              <FooterLink $size={34.4} $ls={0.3}>Términos de uso</FooterLink>
            </Column>
          </Footer>
        </Page>
        <ScrollTrack>
          <Caret $up $c="#8a8a8a" $x={8} $y={8} />
          <ScrollThumb />
          <Caret $c="#fff" $x={8} $y={8} />
        </ScrollTrack>
      </Viewport>

      <Taskbar>
        {apps.map((a, i) => (
          <AppButton key={i} $active={a.active}>
            {a.icon}
            {a.badge && <Badge $x={a.bx!}>{a.badge}</Badge>}
            {a.run && <Running $active={a.active} />}
          </AppButton>
        ))}
        <Tray>
          <Stroke s={22} h={12} c="#fff" w={2.5}><path d="M1 11L11 1.5L21 11" /></Stroke>
          <TrayIcon $gap={37}>
            <Stroke s={32} h={24} c="#fff" w={2}>
              <path d="M1 9.5Q16 -6.5 31 9.5M5.5 13.5Q16 2.5 26.5 13.5M9.5 17.5Q16 10.5 22.5 17.5" />
              <circle cx="16" cy="20" r="2.5" fill="#fff" stroke="none" />
            </Stroke>
          </TrayIcon>
          <TrayIcon $gap={16}>
            <Stroke s={32} h={28} c="#fff" w={2}>
              <path d="M1 10H6L13 3V25L6 18H1ZM17 10Q19.5 14 17 18M21 5.5Q26 14 21 22.5M25 1Q36 14 25 27" strokeLinejoin="round" />
            </Stroke>
          </TrayIcon>
          <Clock>
            <ClockLine $size={24}>11:19</ClockLine>
            <ClockLine $size={24}>22-11-2024</ClockLine>
          </Clock>
          <Stroke s={26} h={28} c="#fff" w={2}>
            <path d="M13 1C7 1 4 5.5 4 10.5V17L1 22.5H25L22 17V10.5C22 5.5 19 1 13 1ZM9 23.5Q13 30 17 23.5" strokeLinejoin="round" />
          </Stroke>
        </Tray>
      </Taskbar>
    </Screen>
  );
}
